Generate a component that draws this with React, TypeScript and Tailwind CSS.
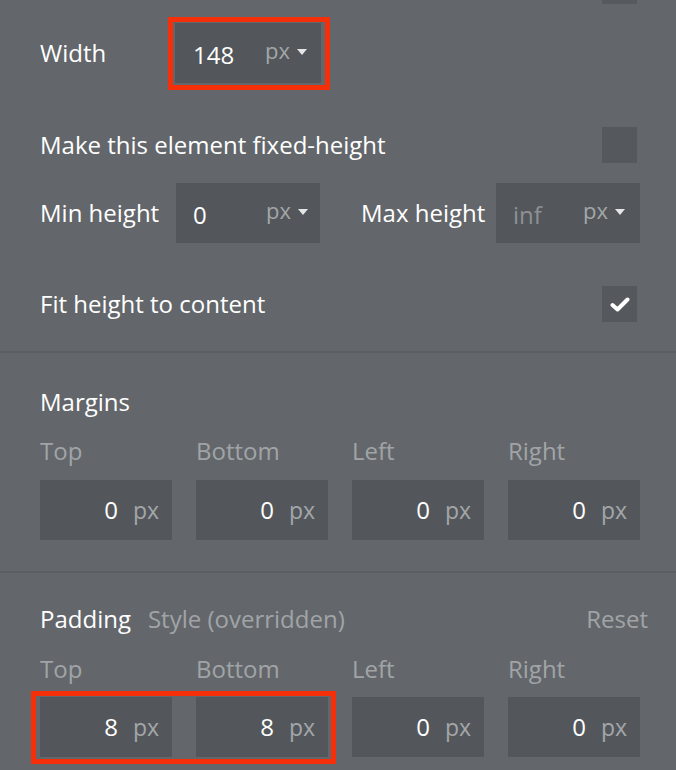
import React from "react";

const Caret = () => (
  <svg width="10" height="6" viewBox="0 0 10 6" className="block">
    <path d="M0 0 L10 0 L5 6 Z" fill="#e4e6e8" />
  </svg>
);

const Check = () => (
  <svg width="20" height="15" viewBox="0 0 20 15" className="block">
    <path d="M2.5 8 L7.5 12.5 L17.5 2.5" stroke="#ffffff" strokeWidth="4" fill="none" strokeLinecap="round" strokeLinejoin="round" />
  </svg>
);

function UnitInput({ value, placeholder, w, pl, pr }: { value?: string; placeholder?: string; w: string; pl: string; pr: string }) {
  return (
    <div className={`${w} ${pl} ${pr} h-[60px] bg-[#53575b] flex items-center justify-between`}>
      {value !== undefined ? (
        <span className="text-[24px] text-white mt-[3px]">{value}</span>
      ) : (
        <span className="text-[24px] text-[#8d9194] mt-[3px]">{placeholder}</span>
      )}
      <span className="flex items-center gap-[7px] -mt-[3px]">
        <span className="text-[22px] text-[#a3a6a9] leading-[30px] -mt-[4px]">px</span>
        <Caret />
      </span>
    </div>
  );
}

function BoxInput({ value }: { value: string }) {
  return (
    <div className="h-[60px] bg-[#53575b] flex items-center justify-end pr-[13px] gap-[15px]">
      <span className="text-[24px] text-white">{value}</span>
      <span className="text-[23px] text-[#a3a6a9]">px</span>
    </div>
  );
}

function Labels() {
  return (
    <div className="grid grid-cols-4 gap-x-[24px] h-[30px] items-center text-[24px] text-[#a1a4a7]">
      <span>Top</span>
      <span>Bottom</span>
      <span>Left</span>
      <span>Right</span>
    </div>
  );
}

export default function App() {
  return (
    <div
      className="w-[676px] h-[770px] overflow-hidden bg-[#63676b] text-white leading-[30px]"
      style={{ fontFamily: '"Open Sans", "Noto Sans", sans-serif' }}
    >
      <div className="pl-[40px] pr-[36px]">
        <div className="h-[4px] flex justify-end">
          <div className="w-[35px] h-[4px] bg-[#565a5e] mr-[3px]" />
        </div>

        <div className="mt-[19px] h-[60px] flex items-center">
          <span className="w-[135px] text-[24px]">Width</span>
          <div className="relative">
            <div className="absolute -left-[7px] -top-[6px] w-[162px] h-[73px] border-[5px] border-[#f42f0a]" />
            <UnitInput value="148" w="w-[146px]" pl="pl-[18px]" pr="pr-[14px]" />
          </div>
        </div>

        <div className="mt-[44px] h-[36px] flex items-center justify-between">
          <span className="text-[24px]">Make this element fixed-height</span>
          <div className="w-[35px] h-[36px] bg-[#55595d] mr-[3px]" />
        </div>

        <div className="mt-[20px] h-[60px] flex items-center">
          <span className="w-[136px] text-[24px]">Min height</span>
          <UnitInput value="0" w="w-[144px]" pl="pl-[17px]" pr="pr-[12px]" />
          <span className="ml-[41px] w-[135px] text-[24px]">Max height</span>
          <UnitInput placeholder="inf" w="w-[144px]" pl="pl-[17px]" pr="pr-[15px]" />
        </div>

        <div className="mt-[43px] h-[36px] flex items-center justify-between">
          <span className="text-[24px]">Fit height to content</span>
          <div className="w-[35px] h-[36px] bg-[#55595d] mr-[3px] flex items-center justify-center">
            <Check />
          </div>
        </div>
      </div>

      <div className="mt-[29px] border-t-2 border-[#5b5f63] pl-[40px] pr-[36px] pt-[34px] pb-[31px]">
        <div className="h-[30px] flex items-center text-[24px]">Margins</div>
        <div className="mt-[19px]">
          <Labels />
        </div>
        <div className="mt-[14px] grid grid-cols-4 gap-x-[24px]">
          <BoxInput value="0" />
          <BoxInput value="0" />
          <BoxInput value="0" />
          <BoxInput value="0" />
        </div>
      </div>

      <div className="border-t-2 border-[#5b5f63] pl-[40px] pr-[36px] pt-[31px]">
        <div className="h-[30px] flex items-center text-[24px]">
          <span>Padding</span>
          <span className="ml-[17px] text-[#a1a4a7]">Style (overridden)</span>
          <span className="ml-auto -mr-[8px] text-[#a1a4a7]">Reset</span>
        </div>
        <div className="mt-[20px]">
          <Labels />
        </div>
        <div className="relative mt-[13px] grid grid-cols-4 gap-x-[24px]">
          <div className="absolute -left-[9px] -top-[6px] w-[305px] h-[73px] border-[5px] border-[#f42f0a]" />
          <BoxInput value="8" />
          <BoxInput value="8" />
          <BoxInput value="0" />
          <BoxInput value="0" />
        </div>
      </div>
    </div>
  );
}
